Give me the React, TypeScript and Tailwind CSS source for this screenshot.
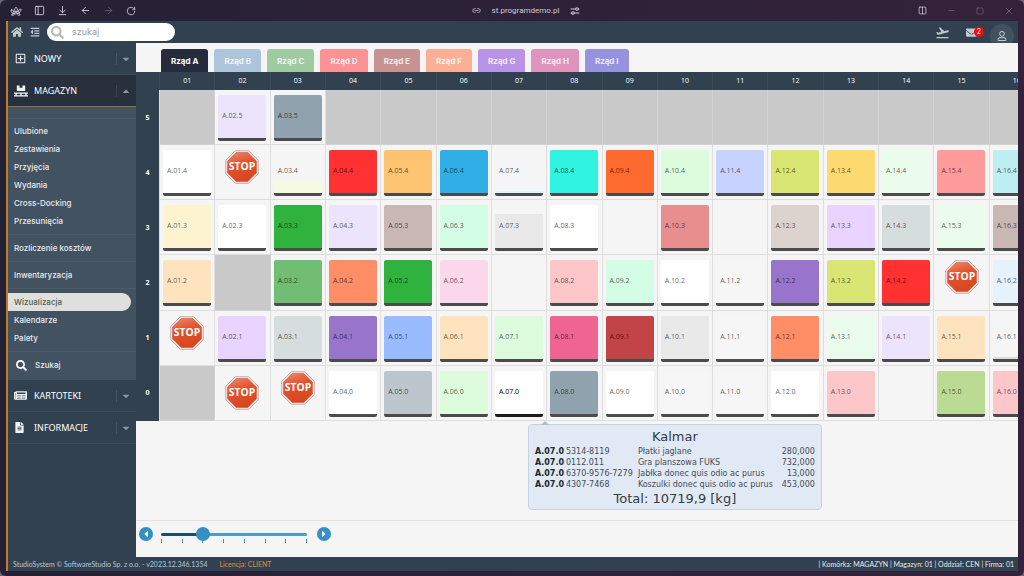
import React from "react";
import { ArrowDownToLine, ArrowLeft, ArrowRight, Columns2, Link2, Minus, PanelLeft, RotateCw, Square, X } from "lucide-react";
import {
  FaCaretDown,
  FaCaretLeft,
  FaCaretRight,
  FaCaretUp,
  FaEnvelope,
  FaFileAlt,
  FaHome,
  FaNewspaper,
  FaOutdent,
  FaPallet,
  FaRegPlusSquare,
  FaRegUser,
  FaSearch,
} from "react-icons/fa";
import { MdFlightTakeoff } from "react-icons/md";

type Tile = { fill: string; level?: string; active?: boolean };
type Cell = Tile | "closed" | "stop" | "stop-low" | "empty";

const t = (fill: string, level?: string): Tile => ({ fill, level });

const white = t("bg-white");
const clear = t("bg-[#f6f6f6]");
const lilac = t("bg-[#ece3fc]");
const violet = t("bg-[#e9d4ff]");
const purple = t("bg-[#9875cb]");
const red = t("bg-[#ff3131]");
const green = t("bg-[#30b23e]");
const coral = t("bg-[#ff8d66]");
const lime = t("bg-[#dae673]");
const mint = t("bg-[#dcfcdd]");
const paleMint = t("bg-[#eafdec]");
const aqua = t("bg-[#d4fde6]");
const pink = t("bg-[#fdc7c9]");
const taupe = t("bg-[#c8b7b3]");
const mist = t("bg-[#d6dddd]");
const slate = t("bg-[#8fa2ad]");
const peach = t("bg-[#fee4be]");

const rows: { level: number; cells: Cell[] }[] = [
  {
    level: 5,
    cells: ["closed", lilac, slate, "closed", "closed", "closed", "closed", "closed", "closed", "closed", "closed", "closed", "closed", "closed", "closed", "closed"],
  },
  {
    level: 4,
    cells: [white, "stop", t("bg-[#f7fae2]", "h-3"), red, t("bg-[#fcc470]"), t("bg-[#2fafe6]"), t("bg-[#dff3fc]", "h-0.5"), t("bg-[#30f3e2]"), t("bg-[#ff6a2f]"), mint, t("bg-[#c8d2ff]"), lime, t("bg-[#fdda70]"), paleMint, t("bg-[#ff9b9b]"), t("bg-[#bdeef2]")],
  },
  {
    level: 3,
    cells: [t("bg-[#fdf3cf]"), white, green, lilac, taupe, aqua, t("bg-[#e9e9e9]", "h-[34px]"), white, "empty", t("bg-[#e88e8e]"), "empty", t("bg-[#dcd2ce]"), violet, mist, paleMint, taupe],
  },
  {
    level: 2,
    cells: [peach, "closed", t("bg-[#70bd73]"), coral, green, t("bg-[#fcd8ec]"), "empty", pink, aqua, white, clear, purple, lime, red, "stop", t("bg-[#e6f2fd]")],
  },
  {
    level: 1,
    cells: ["stop", violet, mist, purple, t("bg-[#98bcff]"), peach, mint, t("bg-[#f06493]"), t("bg-[#c24446]"), t("bg-[#e9e9e9]"), clear, coral, paleMint, lilac, peach, t("bg-[#dddddd]", "h-0.5")],
  },
  {
    level: 0,
    cells: ["closed", "stop-low", "stop", white, t("bg-[#bcc6cc]"), mint, { fill: "bg-white", active: true }, slate, white, clear, clear, white, pink, "empty", t("bg-[#bbdb94]"), pink],
  },
];

const tabs = [
  { name: "Rząd A", look: "bg-[#262c3b] text-white" },
  { name: "Rząd B", look: "bg-[#adc5da] text-white/80" },
  { name: "Rząd C", look: "bg-[#a0cba0] text-white/80" },
  { name: "Rząd D", look: "bg-[#fb9295] text-white/80" },
  { name: "Rząd E", look: "bg-[#c69292] text-white/80" },
  { name: "Rząd F", look: "bg-[#fbaf94] text-white/80" },
  { name: "Rząd G", look: "bg-[#b993e6] text-white/80" },
  { name: "Rząd H", look: "bg-[#df93bd] text-white/80" },
  { name: "Rząd I", look: "bg-[#9592e0] text-white/80" },
];

const stock = [
  { code: "5314-8119", name: "Płatki jaglane", qty: "280,000" },
  { code: "0112.011", name: "Gra planszowa FUKS", qty: "732,000" },
  { code: "6370-9576-7279", name: "Jabłka donec quis odio ac purus", qty: "13,000" },
  { code: "4307-7468", name: "Koszulki donec quis odio ac purus", qty: "453,000" },
];

const pad = (n: number) => String(n).padStart(2, "0");

function ArcLogo() {
  return (
    <svg viewBox="0 0 24 24" className="size-3" fill="none" stroke="currentColor" strokeWidth="1.800" strokeLinejoin="round" strokeLinecap="round" aria-hidden="true">
      <path d="M4 20 10.500 5.500Q12 3 13.500 5.500L20 20Q17 22 15.500 19L12 11 8.500 19Q7 22 4 20Z" />
      <path d="M2.500 10Q1 14 5 16.500 12 20 18 16 21.500 13 22.500 9 20 6.500 18.500 10 16 14.500 11 14.500 7 14 5.500 10.500 4 8 2.500 10Z" />
    </svg>
  );
}

function TuneIcon() {
  return (
    <svg viewBox="0 0 16 14" className="h-2 w-2.5" fill="none" stroke="currentColor" strokeWidth="1.800" strokeLinecap="round" aria-hidden="true">
      <path d="M1 3.500h8M14 3.500h1M1 10.500h1M7 10.500h8" />
      <circle cx="11.500" cy="3.500" r="2.200" />
      <circle cx="4.500" cy="10.500" r="2.200" />
    </svg>
  );
}

function StopSign() {
  return (
    <svg viewBox="0 0 66 66" className="mx-auto size-[34px]" role="img" aria-label="Stop">
      <defs>
        <linearGradient id="stop-face" x1="0" y1="0" x2="0.300" y2="1">
          <stop offset="0" stopColor="#ee8a6c" />
          <stop offset="0.450" stopColor="#e2532f" />
          <stop offset="1" stopColor="#d8481f" />
        </linearGradient>
      </defs>
      <path d="M20 1.500h26L64.500 20v26L46 64.500H20L1.500 46V20Z" fill="#fbeeee" stroke="#b98f8f" strokeWidth="1.500" />
      <path d="M21.500 5h23L61 21.500v23L44.500 61h-23L5 44.500v-23Z" fill="url(#stop-face)" stroke="#c8583c" strokeWidth="1.200" />
      <text x="33" y="39.500" textAnchor="middle" fontFamily="'Open Sans', sans-serif" fontWeight="700" fontSize="20" fill="#fff">
        STOP
      </text>
    </svg>
  );
}

function StockTooltip() {
  return (
    <div role="tooltip" className="absolute left-9 top-full z-10 mt-1 w-[294px] rounded border border-[#c3d3e6] bg-[#e1e9f5] px-1.5 pb-px pt-[3px] font-['DejaVu_Sans',sans-serif] text-[#454c58]">
      <span className="absolute -top-1 left-3 border-x-4 border-b-4 border-x-transparent border-b-[#aebccb]" />
      <div className="text-center text-[13px] leading-[18px] text-[#333b47]">Kalmar</div>
      <table className="w-full text-[8px] leading-[11px]">
        <tbody>
          {stock.map((s) => (
            <tr key={s.code}>
              <th scope="row" className="w-[31px] p-0 text-left font-bold text-[#22272f]">A.07.0</th>
              <td className="w-[72px] p-0">{s.code}</td>
              <td className="whitespace-nowrap p-0">{s.name}</td>
              <td className="p-0 text-right">{s.qty}</td>
            </tr>
          ))}
        </tbody>
      </table>
      <div className="text-center text-[13px] leading-[18px] text-[#333b47]">Total: 10719,9 [kg]</div>
    </div>
  );
}

function RackTile({ tile, label }: { tile: Tile; label: string }) {
  return (
    <button
      type="button"
      className={
        "relative ml-[3px] flex h-[46px] w-12 flex-col justify-end overflow-hidden rounded-[2px] border-b-3 text-left " +
        (tile.active ? "border-[#1b1b1b] text-black" : "border-[#4b4b4b] text-black/65")
      }
    >
      <span className={"block w-full " + (tile.level ?? "h-full") + " " + tile.fill} />
      <span className="absolute left-1 top-4 leading-[10px]">{label}</span>
    </button>
  );
}

function RackCell({ cell, column, level }: { cell: Cell; column: number; level: number }) {
  const base = "border-b border-r p-0 align-top ";
  if (cell === "closed") return <td className={base + "border-[#d2d2d2] bg-[#c9c9c9]"} />;
  if (cell === "empty") return <td className={base + "border-[#dedede]"} />;
  if (cell === "stop") return <td className={base + "border-[#dedede] pt-[5px]"}><StopSign /></td>;
  if (cell === "stop-low") return <td className={base + "border-[#dedede] pt-2.5"}><StopSign /></td>;
  return (
    <td className={base + "relative border-[#dedede] pt-[5px]"}>
      <RackTile tile={cell} label={`A.${pad(column)}.${level}`} />
      {cell.active && <StockTooltip />}
    </td>
  );
}

function MenuGroup({ icon, label, open }: { icon: React.ReactNode; label: string; open?: boolean }) {
  return (
    <button
      type="button"
      aria-expanded={!!open}
      className={
        "flex h-8 w-full items-center border-b font-['Noto_Sans',sans-serif] text-[9px] text-white " +
        (open ? "border-[#8f6d36] bg-[#27303c]" : "border-[#3b4b5a] bg-[#324150]")
      }
    >
      <span className="ml-1.5 flex w-5 items-center text-[#f3f5f7]">{icon}</span>
      <span>{label}</span>
      <span className="ml-auto flex h-3 w-5 items-center border-l border-white/10 pl-1 text-[10px] text-[#8894a0]">
        {open ? <FaCaretUp /> : <FaCaretDown />}
      </span>
    </button>
  );
}

function MenuLink({ label, active }: { label: string; active?: boolean }) {
  return (
    <a
      href="#"
      className={"flex h-[18px] items-center pl-1.5 font-medium " + (active ? "mr-[5px] rounded-r-full bg-[#dfdfdd] text-[#4c6154]" : "text-[#e6eaee]")}
    >
      {label}
    </a>
  );
}

const Divider = () => <div className="my-1 h-px bg-[#4c5b69]" />;

export default function App() {
  return (
    <div className="min-h-screen bg-[#68657a] font-['Inter',sans-serif] text-[8px] leading-[12px]">
      <div className="flex min-h-screen flex-col rounded-md bg-linear-to-r from-[#252135] to-[#34223a] pb-[5px] pl-1.5 pr-[6px]">
        <div className="flex h-[21px] items-center justify-between text-[#cfcbd8]">
          <div className="flex flex-1 items-center gap-3 pl-1">
            <ArcLogo />
            <PanelLeft className="size-[11px]" />
            <ArrowDownToLine className="size-[11px]" />
            <ArrowLeft className="size-[11px]" />
            <ArrowRight className="size-[11px] opacity-35" />
            <RotateCw className="size-[10px]" />
          </div>
          <div className="ml-7 flex items-center gap-[11px] font-['Roboto',sans-serif]">
            <Link2 className="size-[9px]" />
            <span>st.programdemo.pl</span>
            <TuneIcon />
          </div>
          <div className="flex flex-1 items-center justify-end gap-5 pr-1">
            <Columns2 className="size-[9px]" />
            <Minus className="size-[9px] opacity-40" />
            <Square className="size-[8px] opacity-40" />
            <X className="size-[10px] opacity-40" />
          </div>
        </div>

        <div className="flex flex-1 flex-col border-l-2 border-[#c17c28] bg-[#f5f5f5]">
          <header className="flex h-[22px] items-center overflow-hidden bg-[#324150] text-[#c3cad0]">
            <a href="#" aria-label="Start" className="ml-[3px]"><FaHome className="size-3" /></a>
            <a href="#" aria-label="Menu" className="ml-[7px]"><FaOutdent className="size-[10px]" /></a>
            <label className="ml-[7px] flex h-[18px] w-32 items-center rounded-full bg-white pl-1">
              <FaSearch className="size-[13px] text-[#b9b9b9]" />
              <input type="text" aria-label="szukaj" placeholder="szukaj" className="ml-2 w-24 bg-transparent text-[9px] outline-none placeholder:text-[#9d9d9d]" />
            </label>
            <div className="ml-auto flex h-full items-center">
              <a href="#" aria-label="Wydania"><MdFlightTakeoff className="size-[15px]" /></a>
              <a href="#" aria-label="Wiadomości" className="relative ml-4">
                <FaEnvelope className="size-[11px]" />
                <span className="absolute -right-[7px] top-0 flex size-[10px] items-center justify-center rounded-full bg-[#f8060b] text-[7px] text-white">2</span>
              </a>
              <a href="#" aria-label="Konto" className="ml-[13px] mr-1 mt-2 flex size-6 items-center justify-center rounded-full bg-[#41515f]">
                <FaRegUser className="size-[10px]" />
              </a>
            </div>
          </header>

          <div className="flex flex-1">
            <nav className="w-32 shrink-0 bg-[#324150]">
              <MenuGroup icon={<FaRegPlusSquare className="ml-px size-[11px]" />} label="NOWY" />
              <MenuGroup icon={<FaPallet className="size-[14px]" />} label="MAGAZYN" open />
              <div className="bg-[#435261] pb-1.5 pt-[11px]">
                <div className="mb-[3px] h-px bg-[#4c5b69]" />
                <MenuLink label="Ulubione" />
                <MenuLink label="Zestawienia" />
                <MenuLink label="Przyjęcia" />
                <MenuLink label="Wydania" />
                <MenuLink label="Cross-Docking" />
                <MenuLink label="Przesunięcia" />
                <Divider />
                <MenuLink label="Rozliczenie kosztów" />
                <Divider />
                <MenuLink label="Inwentaryzacja" />
                <Divider />
                <MenuLink label="Wizualizacja" active />
                <MenuLink label="Kalendarze" />
                <MenuLink label="Palety" />
                <Divider />
                <a href="#" className="flex h-[18px] items-center pl-2 font-medium text-[#e6eaee]">
                  <FaSearch className="size-[11px] text-white" />
                  <span className="ml-2">Szukaj</span>
                </a>
              </div>
              <MenuGroup icon={<FaNewspaper className="size-[13px]" />} label="KARTOTEKI" />
              <MenuGroup icon={<FaFileAlt className="size-[11px]" />} label="INFORMACJE" />
            </nav>

            <main className="flex min-w-0 flex-1 flex-col">
              <div role="tablist" className="flex gap-1.5 pl-[25px] pt-1.5">
                {tabs.map((tab, i) => (
                  <button key={tab.name} type="button" role="tab" aria-selected={i === 0} className={"h-[23px] rounded-t-[3px] px-2.5 font-bold " + tab.look}>
                    {tab.name}
                  </button>
                ))}
              </div>
              <div className="flex-1 overflow-x-auto [scrollbar-width:none]">
                <table className="h-[349px] w-[909px] table-fixed border-separate border-spacing-0 font-['Open_Sans',sans-serif] text-[7px]">
                  <thead>
                    <tr className="h-[18px] bg-[#324150] text-white">
                      <td className="w-6 border-r border-[#3b4b5a] p-0" />
                      {rows[0].cells.map((_, i) => (
                        <th key={i} scope="col" className="border-r border-[#3b4b5a] p-0 font-medium">{pad(i + 1)}</th>
                      ))}
                    </tr>
                  </thead>
                  <tbody>
                    {rows.map((row) => (
                      <tr key={row.level}>
                        <th scope="row" className="border-r border-[#dedede] bg-[#324150] p-0 text-center font-bold text-white">{row.level}</th>
                        {row.cells.map((cell, i) => (
                          <RackCell key={i} cell={cell} column={i + 1} level={row.level} />
                        ))}
                      </tr>
                    ))}
                  </tbody>
                </table>
              </div>
              <div className="flex h-[37px] items-center border-t border-[#e2e2e2] pb-2.5 pl-[3px]">
                <button type="button" aria-label="Poprzedni" className="flex size-3.5 items-center justify-center rounded-full bg-[#3790c2] text-[10px] text-white">
                  <FaCaretLeft />
                </button>
                <div className="relative mx-px h-3.5 w-40">
                  <div className="absolute inset-x-[7px] top-[6px] h-[3px] rounded-full bg-linear-to-r from-[#17506a] from-29% to-[#4a9cca] to-29%" />
                  <div className="absolute inset-x-[7px] top-3 flex justify-between">
                    {Array.from({ length: 8 }, (_, i) => (
                      <span key={i} className="h-1 w-px bg-[#4d8fae]" />
                    ))}
                  </div>
                  <input
                    type="range"
                    aria-label="Powiększenie"
                    min={0}
                    max={7}
                    defaultValue={2}
                    className="absolute inset-0 m-0 w-full appearance-none bg-transparent [&::-webkit-slider-thumb]:size-3.5 [&::-webkit-slider-thumb]:appearance-none [&::-webkit-slider-thumb]:rounded-full [&::-webkit-slider-thumb]:bg-[#3790c2]"
                  />
                </div>
                <button type="button" aria-label="Następny" className="ml-0.5 flex size-3.5 items-center justify-center rounded-full bg-[#3790c2] text-[10px] text-white">
                  <FaCaretRight />
                </button>
              </div>
            </main>
          </div>

          <footer className="flex h-[14px] items-center bg-[#324150] pl-[5px] pr-1 font-['Lato',sans-serif] text-[7px]">
            <span className="text-[#b3c6de]">StudioSystem © SoftwareStudio Sp. z o.o. - v2023.12.346.1354</span>
            <span className="ml-3 text-[#e0863f]">Licencja: CLIENT</span>
            <span className="ml-auto text-[#e6eaee]">| Komórka: MAGAZYN | Magazyn: 01 | Oddział: CEN | Firma: 01</span>
          </footer>
        </div>
      </div>
    </div>
  );
}
